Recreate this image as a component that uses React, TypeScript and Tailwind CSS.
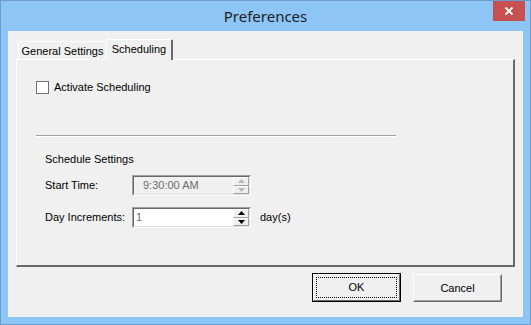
import React from "react";

const ui = { fontFamily: '"Liberation Sans", Arial, sans-serif' };

const Sunken = ({ children, disabled }: { children: React.ReactNode; disabled?: boolean }) => (
  <div className="w-[119px] h-[21px] border border-t-[#a0a0a0] border-l-[#a0a0a0] border-r-white border-b-white">
    <div
      className={
        "h-full w-full flex border border-t-[#696969] border-l-[#696969] border-r-[#e3e3e3] border-b-[#e3e3e3] " +
        (disabled ? "bg-[#f0f0f0]" : "bg-white")
      }
    >
      {children}
    </div>
  </div>
);

const SpinHalf = ({ up, disabled }: { up?: boolean; disabled?: boolean }) => (
  <div className="flex-1 flex items-center justify-center bg-[#f0f0f0] border border-t-white border-l-white border-r-[#a0a0a0] border-b-[#a0a0a0]">
    <svg width="7" height="4" viewBox="0 0 7 4">
      <polygon
        points={up ? "3.5,0 7,4 0,4" : "0,0 7,0 3.5,4"}
        fill={disabled ? "#b8b8b8" : "#000"}
      />
    </svg>
  </div>
);

const Spin = ({ disabled }: { disabled?: boolean }) => (
  <div className="w-[16px] flex flex-col">
    <SpinHalf up disabled={disabled} />
    <SpinHalf disabled={disabled} />
  </div>
);

// window close glyph, drawn as one small icon
const CloseIcon = () => (
  <svg width="32" height="20" viewBox="0 0 32 20" className="block">
    <rect x="0" y="0" width="32" height="20" fill="#c75050" />
    <path d="M12.5 6.5 L19.5 13.5 M19.5 6.5 L12.5 13.5" stroke="#ffffff" strokeWidth="1.8" />
  </svg>
);

const App = () => {
  return (
    <div className="w-[531px] h-[325px] bg-[#8cc5f6] border border-[#6a9ccd] flex flex-col overflow-hidden" style={ui}>
      {/* title bar */}
      <div className="h-[30px] flex">
        <div className="w-[37px] shrink-0" />
        <div className="flex-1 flex items-center justify-center">
          <span className="text-[15px] text-[#1e1e1e] mt-[1px]" style={{ fontFamily: '"Noto Sans", sans-serif' }}>
            Preferences
          </span>
        </div>
        <div className="mr-[5px] shrink-0 self-start">
          <CloseIcon />
        </div>
      </div>

      {/* client area */}
      <div className="mx-[7px] h-[286px] bg-[#f0f0f0] flex flex-col text-[11px] text-black">
        {/* tabs */}
        <div className="ml-[8px] mt-[8px] flex items-end h-[20px] pl-[2px] relative z-10">
          <div className="w-[89px] h-[18px] border border-b-0 border-t-white border-l-white border-r-[#a0a0a0] rounded-t-[2px] flex items-center justify-center pt-[2px]">
            General Settings
          </div>
          <div className="-ml-[1px] w-[67px] h-[21px] -mb-[1px] bg-[#f0f0f0] border border-b-0 border-t-white border-l-white border-r-[#696969] border-r-2 rounded-t-[2px] flex items-center justify-center pb-[1px]">
            Scheduling
          </div>
        </div>

        {/* tab panel */}
        <div className="ml-[8px] w-[499px] h-[208px] border border-t-white border-l-white border-r-[#696969] border-b-[#696969] border-r-2 border-b-2 flex flex-col pl-[19px]">
          <div className="mt-[21px] flex items-center h-[13px]">
            <div className="w-[13px] h-[13px] border border-[#707070] bg-white" />
            <span className="ml-[5px]">Activate Scheduling</span>
          </div>

          <div className="mt-[41px] w-[360px] border-t border-t-[#a0a0a0] border-b border-b-white" />

          <div className="ml-[9px] flex flex-col">
            <div className="mt-[15px] h-[14px] leading-[14px]">Schedule Settings</div>

            <div className="mt-[9px] flex items-center">
              <span className="w-[87px]">Start Time:</span>
              <Sunken disabled>
                <span className="flex-1 pl-[9px] text-[#6d6d6d] leading-[17px]">9:30:00 AM</span>
                <Spin disabled />
              </Sunken>
            </div>

            <div className="mt-[11px] flex items-center">
              <span className="w-[87px]">Day Increments:</span>
              <Sunken>
                <span className="flex-1 pl-[2px] text-[#6d6d6d] leading-[17px]">1</span>
                <Spin />
              </Sunken>
              <span className="ml-[9px]">day(s)</span>
            </div>
          </div>
        </div>

        {/* buttons */}
        <div className="mt-[6px] flex justify-end gap-[12px] pr-[21px]">
          <div className="w-[89px] h-[29px] border border-black">
            <div className="h-full w-full border border-t-white border-l-white border-r-[#696969] border-b-[#696969] bg-[#f0f0f0] p-[2px]">
              <div className="h-full w-full border border-dotted border-black flex items-center justify-center">OK</div>
            </div>
          </div>
          <div className="w-[89px] h-[28px] mt-[1px] border border-t-white border-l-white border-r-[#696969] border-b-[#696969]">
            <div className="h-full w-full border border-t-[#f0f0f0] border-l-[#f0f0f0] border-r-[#a0a0a0] border-b-[#a0a0a0] flex items-center justify-center">
              Cancel
            </div>
          </div>
        </div>
      </div>
    </div>
  );
};

export default App;
